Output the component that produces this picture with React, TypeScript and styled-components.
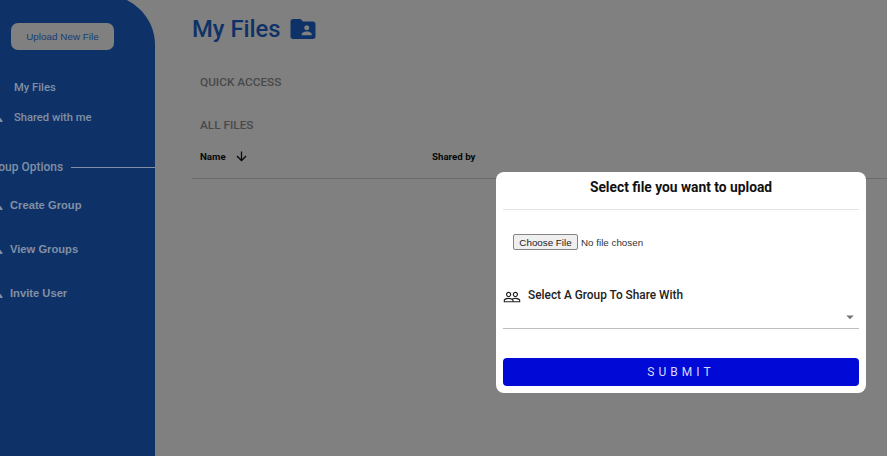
import React from "react";
import styled, { createGlobalStyle } from "styled-components";
import { MdFolderShared, MdArrowDownward, MdPeopleOutline, MdArrowDropDown } from "react-icons/md";

const GlobalStyle = createGlobalStyle`
  * { box-sizing: border-box; }
  body { margin: 0; background: #808080; overflow: hidden; font-family: Roboto, sans-serif; }
`;

const Page = styled.div`
  display: flex;
  width: 887px;
  height: 456px;
  overflow: hidden;
  background: #808080;
`;

const Sidebar = styled.aside`
  width: 155px;
  height: 461px;
  margin-top: -5px;
  padding-top: 28px;
  flex: none;
  overflow: hidden;
  border-top-right-radius: 50px;
  background: #0e3267;
`;

const UploadButton = styled.button`
  display: block;
  width: 103px;
  height: 27px;
  margin: 0 0 22px 11px;
  padding: 0;
  border: 0;
  border-radius: 7px;
  background: #808080;
  color: #163b76;
  font: 9.8px "Liberation Sans", sans-serif;
  letter-spacing: 0.05px;
`;

const NavItem = styled.a<{ $height: number; $indent: number; $arial?: boolean }>`
  display: flex;
  align-items: center;
  height: ${(p) => p.$height}px;
  font: ${(p) => (p.$arial ? '700 11.2px "Liberation Sans", sans-serif' : "500 11.2px Roboto, sans-serif")};
  color: #8190a5;
  white-space: nowrap;

  svg { width: 3px; height: 12px; flex: none; margin-right: ${(p) => p.$indent - 3}px; }
`;

const GroupHeading = styled.div`
  display: flex;
  align-items: center;
  height: 34px;
  margin: 18px 0 0;
  font-size: 12px;
  font-weight: 500;
  color: #8190a5;
  white-space: nowrap;

  span { margin-left: -14px; }
  &::after { content: ""; flex: 1; height: 1px; margin-left: 8px; background: #8190a5; }
`;

const GroupLinks = styled.nav`
  margin-top: -1px;
`;

const Main = styled.main`
  flex: 1;
  min-width: 0;
  padding: 12px 0 0 37px;
`;

const Title = styled.h1`
  display: flex;
  align-items: center;
  height: 34px;
  margin: 0;
  font-size: 23.8px;
  font-weight: 500;
  color: #0e3267;

  svg { width: 30px; height: 30px; margin-left: 7px; }
`;

const SectionLabel = styled.h2<{ $top: number }>`
  height: 20px;
  margin: ${(p) => p.$top}px 0 0 8px;
  font-size: 11.8px;
  line-height: 20px;
  font-weight: 500;
  color: #494949;
`;

const TableHead = styled.div`
  display: grid;
  grid-template-columns: 232px 1fr;
  align-items: center;
  height: 44px;
  padding: 0 0 1px 8px;
  border-bottom: 1px solid #6b6b6b;
  font-size: 9.7px;
  font-weight: 700;
  color: #080808;
`;

const SortCell = styled.div`
  display: flex;
  align-items: center;
  svg { width: 15px; height: 15px; margin-left: 8px; }
`;

const Modal = styled.section`
  position: absolute;
  left: 496px;
  top: 172px;
  width: 370px;
  height: 221px;
  padding: 0 7px;
  border-radius: 8px;
  background: #fff;
`;

const ModalTitle = styled.h2`
  height: 38px;
  margin: 0 0 22px;
  border-bottom: 1px solid #e4e4e4;
  font-size: 13.8px;
  line-height: 31px;
  font-weight: 700;
  text-align: center;
  color: #111;
`;

const FilePicker = styled.div`
  display: flex;
  align-items: center;
  height: 20px;
  padding-left: 10px;
  font: 9.8px "Liberation Sans", sans-serif;
  color: #333;
`;

const ChooseButton = styled.button`
  width: 65px;
  height: 16px;
  margin-right: 3px;
  padding: 0;
  border: 1px solid #858585;
  border-radius: 2px;
  background: #efefef;
  font: inherit;
  color: #222;
`;

const GroupLabel = styled.div`
  display: flex;
  align-items: center;
  height: 24px;
  margin-top: 31px;
  font-size: 11.85px;
  font-weight: 500;
  color: #222;

  svg { width: 18px; height: 18px; margin: 3px 7px 0 0; }
`;

const GroupSelect = styled.div`
  display: flex;
  justify-content: flex-end;
  align-items: center;
  height: 22px;
  padding-bottom: 2px;
  border-bottom: 1px solid #bdbdbd;
  color: #757575;
  svg { width: 18px; height: 18px; }
`;

const SubmitButton = styled.button`
  display: block;
  width: 100%;
  height: 28px;
  margin-top: 29px;
  padding: 0;
  border: 0;
  border-radius: 4px;
  background: #0009d5;
  color: #d6d9ff;
  font: 400 12px Roboto, sans-serif;
  letter-spacing: 4.05px;
`;

const IconEdge = () => (
  <svg viewBox="0 0 3 12" fill="#8190a5">
    <path d="M0 6.5 2.6 10 2.4 11H0Z" />
  </svg>
);
const EmptyEdge = () => <svg viewBox="0 0 3 12" />;

export default function App() {
  return (
    <>
      <GlobalStyle />
      <Page>
        <Sidebar>
          <UploadButton>Upload New File</UploadButton>
          <NavItem $height={30} $indent={14}><EmptyEdge />My Files</NavItem>
          <NavItem $height={30} $indent={14}><IconEdge />Shared with me</NavItem>
          <GroupHeading><span>Group Options</span></GroupHeading>
          <GroupLinks>
            {["Create Group", "View Groups", "Invite User"].map((name) => (
              <NavItem key={name} $height={44} $indent={10} $arial><IconEdge />{name}</NavItem>
            ))}
          </GroupLinks>
        </Sidebar>
        <Main>
          <Title>My Files<MdFolderShared /></Title>
          <SectionLabel $top={26}>QUICK ACCESS</SectionLabel>
          <SectionLabel $top={23}>ALL FILES</SectionLabel>
          <TableHead>
            <SortCell>Name<MdArrowDownward /></SortCell>
            <span>Shared by</span>
          </TableHead>
        </Main>
      </Page>
      <Modal>
        <ModalTitle>Select file you want to upload</ModalTitle>
        <FilePicker><ChooseButton>Choose File</ChooseButton>No file chosen</FilePicker>
        <GroupLabel><MdPeopleOutline />Select A Group To Share With</GroupLabel>
        <GroupSelect><MdArrowDropDown /></GroupSelect>
        <SubmitButton>SUBMIT</SubmitButton>
      </Modal>
    </>
  );
}
